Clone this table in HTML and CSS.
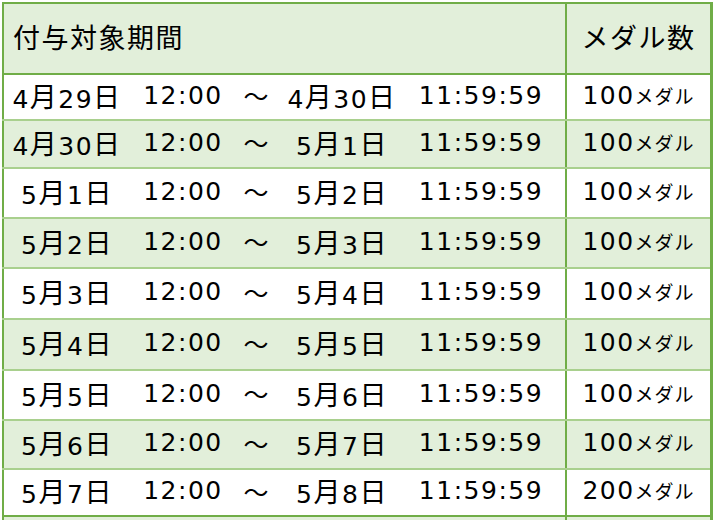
FILE: index.html
```html
<!DOCTYPE html>
<html lang="ja">
<head>
<meta charset="utf-8">
<link rel="stylesheet" href="styles.css">
</head>
<body>
<table class="medal-table">
  <thead>
    <tr class="head">
      <th class="period-h">付与対象期間</th>
      <th class="medal-h">メダル数</th>
    </tr>
  </thead>
  <tbody>
    <tr class="r1"><td class="period"><div class="slots"><span>4<b>月</b>29<b>日</b></span><span>12:00</span><span>～</span><span>4<b>月</b>30<b>日</b></span><span>11:59:59</span></div></td><td class="medal">100<small>メダル</small></td></tr>
    <tr class="r2 alt"><td class="period"><div class="slots"><span>4<b>月</b>30<b>日</b></span><span>12:00</span><span>～</span><span>5<b>月</b>1<b>日</b></span><span>11:59:59</span></div></td><td class="medal">100<small>メダル</small></td></tr>
    <tr class="r3"><td class="period"><div class="slots"><span>5<b>月</b>1<b>日</b></span><span>12:00</span><span>～</span><span>5<b>月</b>2<b>日</b></span><span>11:59:59</span></div></td><td class="medal">100<small>メダル</small></td></tr>
    <tr class="r4 alt"><td class="period"><div class="slots"><span>5<b>月</b>2<b>日</b></span><span>12:00</span><span>～</span><span>5<b>月</b>3<b>日</b></span><span>11:59:59</span></div></td><td class="medal">100<small>メダル</small></td></tr>
    <tr class="r5"><td class="period"><div class="slots"><span>5<b>月</b>3<b>日</b></span><span>12:00</span><span>～</span><span>5<b>月</b>4<b>日</b></span><span>11:59:59</span></div></td><td class="medal">100<small>メダル</small></td></tr>
    <tr class="r6 alt"><td class="period"><div class="slots"><span>5<b>月</b>4<b>日</b></span><span>12:00</span><span>～</span><span>5<b>月</b>5<b>日</b></span><span>11:59:59</span></div></td><td class="medal">100<small>メダル</small></td></tr>
    <tr class="r7"><td class="period"><div class="slots"><span>5<b>月</b>5<b>日</b></span><span>12:00</span><span>～</span><span>5<b>月</b>6<b>日</b></span><span>11:59:59</span></div></td><td class="medal">100<small>メダル</small></td></tr>
    <tr class="r8 alt"><td class="period"><div class="slots"><span>5<b>月</b>6<b>日</b></span><span>12:00</span><span>～</span><span>5<b>月</b>7<b>日</b></span><span>11:59:59</span></div></td><td class="medal">100<small>メダル</small></td></tr>
    <tr class="r9"><td class="period"><div class="slots"><span>5<b>月</b>7<b>日</b></span><span>12:00</span><span>～</span><span>5<b>月</b>8<b>日</b></span><span>11:59:59</span></div></td><td class="medal">200<small>メダル</small></td></tr>
    <tr class="r10 alt"><td class="period"></td><td class="medal"></td></tr>
  </tbody>
</table>
</body>
</html>
```
FILE: styles.css
```css
html, body {
  margin: 0;
  padding: 0;
  background: #ffffff;
}

body {
  padding: 2px 0 0 2px;
  font-family: "DejaVu Sans", "Noto Sans CJK JP", sans-serif;
  color: #000;
}

.medal-table {
  border-collapse: collapse;
  table-layout: fixed;
  width: 711px;
}

.medal-table th,
.medal-table td {
  padding: 0 0 4px 0;
  border-left: 2px solid #70ad47;
  border-right: 2px solid #70ad47;
}

.medal-table tr > :last-child {
  border-right-width: 3px;
}

.head th {
  background: #e2efda;
  height: 65px;
  border-top: 2px solid #70ad47;
  border-bottom: 2px solid #70ad47;
  font-weight: normal;
  font-family: "Noto Sans CJK JP", sans-serif;
  font-size: 27px;
  letter-spacing: 1.5px;
}

.period-h {
  width: 552px;
  text-align: left;
  padding-left: 9px !important;
}

.medal-h {
  text-align: center;
}

tbody td {
  border-top: 2px solid #a9d08e;
  border-bottom: 2px solid #a9d08e;
  font-size: 25px;
  letter-spacing: 1.5px;
  height: 44px;
}

tbody tr.alt td {
  background: #e2efda;
}

tbody tr.r1 td { height: 40px; }
tbody tr.r2 td { height: 42px; }
tbody tr.r5 td,
tbody tr.r6 td { height: 45px; }
tbody tr.r8 td { height: 43px; }

tbody tr.r9 td {
  border-bottom: 2px solid #70ad47;
  height: 41px;
}

tbody tr.r10 td {
  height: 10px;
}

.slots {
  display: grid;
  grid-template-columns: 108px 124px 22px 150px 128px;
  align-items: center;
  padding-left: 9px;
}

.slots span {
  justify-self: center;
  white-space: nowrap;
}

.slots b {
  font-weight: normal;
  font-family: "Noto Sans CJK JP", sans-serif;
  font-size: 27px;
  vertical-align: 1px;
}

.slots span:nth-child(3) {
  letter-spacing: 0;
}

.medal {
  text-align: center;
  white-space: nowrap;
}

.medal small {
  font-family: "Noto Sans CJK JP", sans-serif;
  font-size: 19px;
  letter-spacing: 1px;
}
```
